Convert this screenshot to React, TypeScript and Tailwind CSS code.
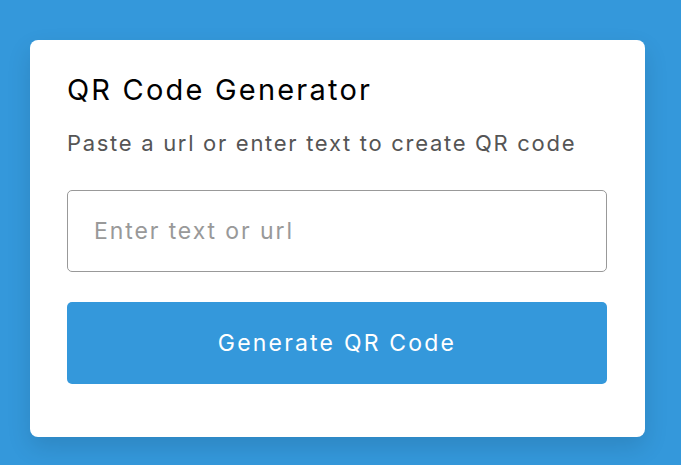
import React from "react";

const App = () => {
  return (
    <div
      className="min-h-screen w-full bg-[#3498db] pt-[40px] pl-[30px]"
      style={{ fontFamily: '"Inter", "Noto Sans", sans-serif' }}
    >
      <div className="w-[615px] h-[397px] rounded-[8px] bg-white px-[37px] pt-[34px] shadow-[0_10px_25px_rgba(0,0,0,0.12)]">
        <h1 className="text-[29px] leading-[32px] font-normal tracking-[2.2px] text-black">QR Code Generator</h1>
        <p className="mt-[23px] text-[22px] leading-[28px] tracking-[1.7px] text-[#555]">
          Paste a url or enter text to create QR code
        </p>
        <input
          type="text"
          placeholder="Enter text or url"
          className="mt-[33px] block w-[540px] h-[82px] rounded-[5px] border border-[#999] px-[26px] text-[23px] tracking-[1.9px] text-[#333] outline-none placeholder:text-[#999]"
        />
        <button className="mt-[30px] block w-[540px] h-[82px] rounded-[5px] bg-[#3498db] text-[23px] tracking-[2.2px] text-white">
          Generate QR Code
        </button>
      </div>
    </div>
  );
};

export default App;
